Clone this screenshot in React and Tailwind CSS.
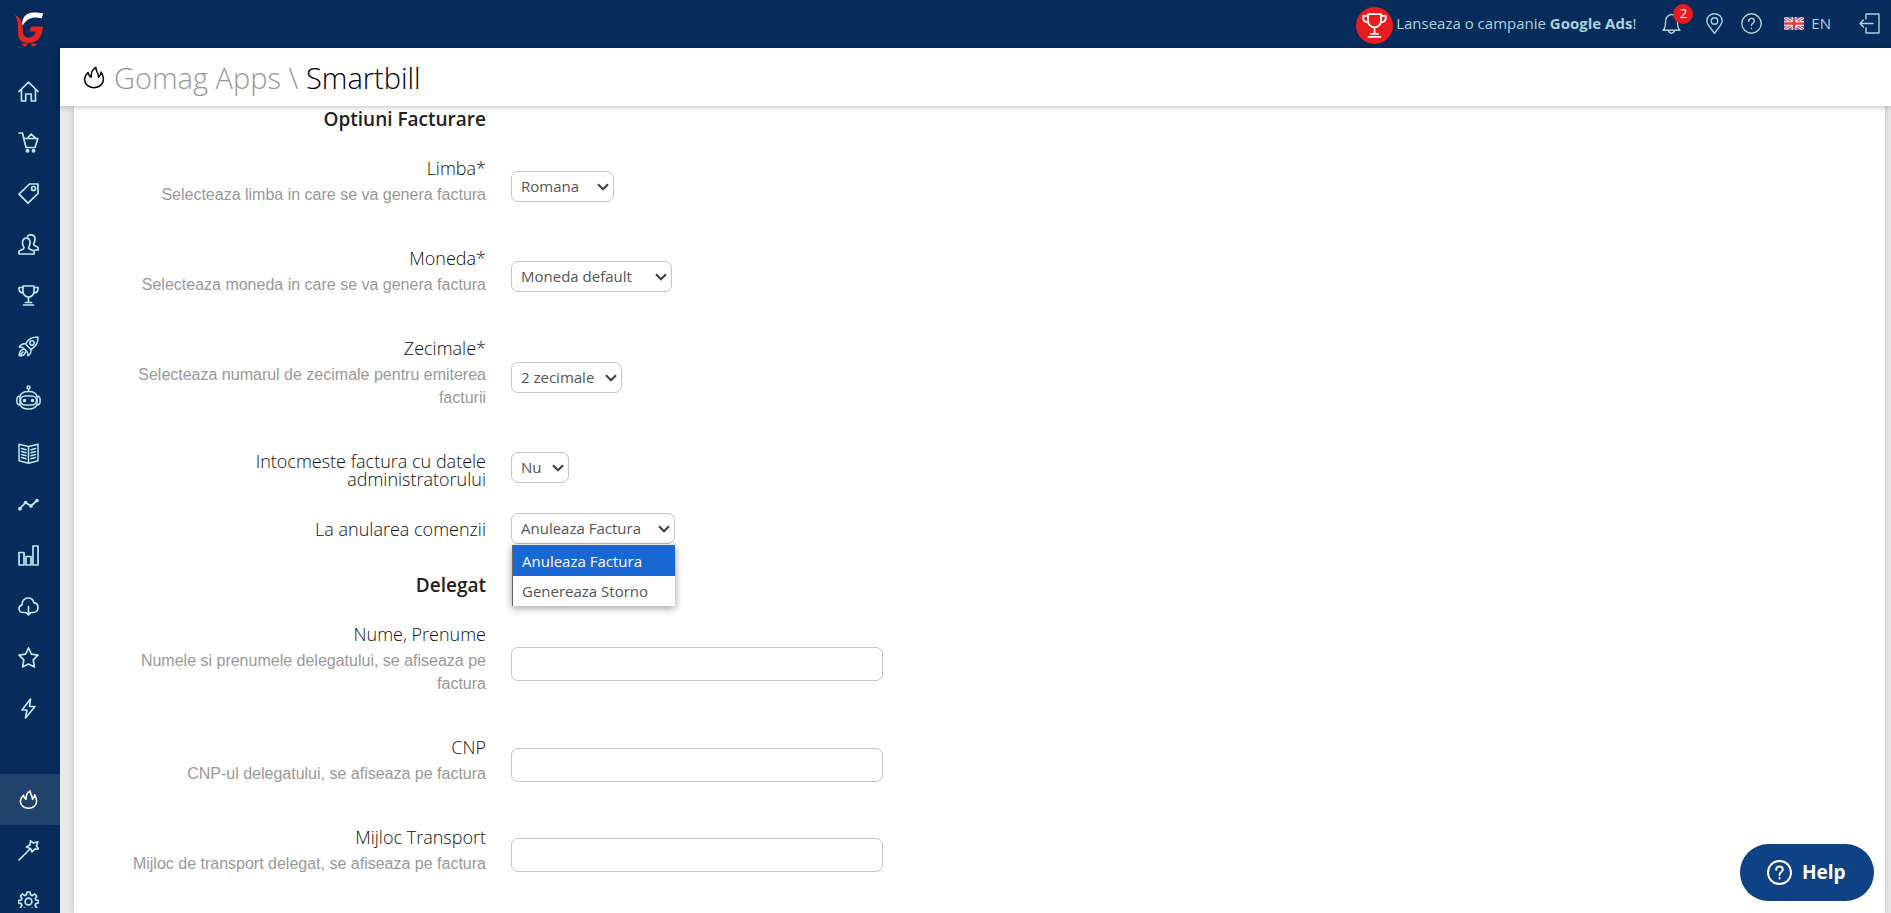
import { useState } from 'react';

const Icon = ({ children, className = 'w-[21px] h-[21px]', sw = 1.7, ...props }) => (
  <svg {...props} className={className} viewBox="0 0 21 21" fill="none" stroke="currentColor" strokeWidth={sw} strokeLinecap="round" strokeLinejoin="round" aria-hidden="true">
    {children}
  </svg>
);

const Trophy = (props) => (
  <Icon {...props}>
    <path d="M5 1h11v5.500c0 3-2.500 5.500-5.500 5.500S5 9.500 5 6.500zM5 2.500H1v1.500c0 2.300 1.700 3.800 4.300 4M16 2.500h4v1.500c0 2.300-1.700 3.800-4.300 4M10.500 12v5.500M7.500 17.500h6M5.500 20h10" />
  </Icon>
);

const Flame = (props) => (
  <Icon {...props}>
    <path d="M12.300 0.900C9.300 2.500 7.600 5.500 7.800 10.300C6.300 9.500 5.300 8 4.900 5.800C2.800 7.800 1.500 10 1.500 12.300C1.500 17 5.600 20.200 10.500 20.200S19.500 17 19.500 12.300C19.500 9.500 18.500 7.300 17.300 5.300C17 7.500 16.300 9 14.800 10.300C15 8 14.300 6.500 13.300 4.800C12.600 3.500 12.300 2.300 12.300 0.900z" />
  </Icon>
);

const mainNav = [
  { label: 'Acasa', icon: <Icon><path d="M1 10.500L10.500 1.200L20 10.500M3.500 8.500V20h4.200v-7h5.600v7h4.200V8.500" /></Icon> },
  {
    label: 'Comenzi',
    icon: (
      <Icon>
        <path d="M1 1h3.500l3.500 14.500h9L19.800 6.500H6M9 6.500l4.200-4.300L18 6.500" />
        <circle cx="9.500" cy="18.800" r="1.100" fill="currentColor" />
        <circle cx="15.500" cy="18.800" r="1.100" fill="currentColor" />
      </Icon>
    ),
  },
  { label: 'Produse', icon: <Icon><path d="M11.500 1H20v9.500L10 20.200L1 11.200z" /><circle cx="15.500" cy="5.500" r="2" /></Icon> },
  {
    label: 'Clienti',
    icon: (
      <Icon>
        <path d="M1 20v-2.500c0-1.500 5-1.800 5-3.500c0-1.200-1.500-2.500-1.500-5c0-3 1.500-4.800 3.800-4.800s3.800 1.800 3.800 4.800c0 2.500-1.500 3.800-1.500 5c0 1.700 5.500 2 5.500 3.500V20z" />
        <path d="M9.500 2.200C10.200 1.200 11.500 0.800 13 0.800c2.500 0 4 1.700 4 4.500c0 2.500-1.400 3.700-1.400 5.200c0 1.700 4.600 1.800 4.600 3.500v2h-3.400" />
      </Icon>
    ),
  },
  { label: 'Marketing', icon: <Trophy /> },
  {
    label: 'Promovare',
    icon: (
      <Icon sw={1.500}>
        <path d="M20 1c-6 0-9 1.500-12.500 7L13 13.500C18.500 10 20 7 20 1zM7.500 8C5 7.500 2.800 8.500 1.200 11.200c1.500-.4 3-.2 4 .8M13 13.500c.5 2.500-.5 4.700-3.200 6.300c.4-1.500.2-3-.8-4M5.200 12L9 15.800M5 13.500c-2.500.5-3.800 2.500-3.800 6.300c3.800 0 5.800-1.300 6.300-3.800M1.500 19.500l3.500-3.500" />
        <circle cx="14" cy="7" r="2.200" />
      </Icon>
    ),
  },
  {
    label: 'Automatizari',
    icon: (
      <svg className="w-[25px] h-[25px]" viewBox="0 0 25 25" fill="none" stroke="currentColor" strokeWidth="1.500" aria-hidden="true">
        <circle cx="12.500" cy="2.500" r="1.500" />
        <path d="M12.500 4v2.500M4 11.500C4.500 8.500 8 6.500 12.500 6.500s8 2 8.500 5M4 19.500c1 3 4 4.500 8.500 4.500s7.500-1.500 8.500-4.500M4 11v9C1.800 20 .8 18.500 .8 15.500S1.800 11 4 11zM21 11v9c2.200 0 3.200-1.500 3.200-4.500S23.200 11 21 11z" />
        <rect x="4.500" y="11" width="16" height="9" rx="4.500" />
        <circle cx="8.500" cy="15.500" r="1" fill="currentColor" />
        <circle cx="16.500" cy="15.500" r="1" fill="currentColor" />
      </svg>
    ),
  },
];

const reportNav = [
  {
    label: 'Continut',
    icon: (
      <Icon sw={1.500}>
        <path d="M1 1.200l9.500 2.300L20 1.200v16.500l-9.500 2.500L1 17.700zM10.500 3.500v16.500M3.500 5.500l4.500 1.200M3.500 8.500l4.500 1.200M3.500 11.500l4.500 1.200M3.500 14.500l4.500 1.200M17.500 5.500l-4.500 1.200M17.500 8.500l-4.500 1.200M17.500 11.500l-4.500 1.200M17.500 14.500l-4.500 1.200" />
      </Icon>
    ),
  },
  {
    label: 'Rapoarte',
    icon: (
      <Icon>
        <path d="M2 14.500l5.500-6l5.500 3.500l6-5.500" />
        <g fill="currentColor"><circle cx="2" cy="14.700" r="1" /><circle cx="7.500" cy="8.500" r="1" /><circle cx="13" cy="12" r="1" /><circle cx="19" cy="6.500" r="1" /></g>
      </Icon>
    ),
  },
  { label: 'Statistici', icon: <Icon><path d="M1 7.500h5V20H1zM8 11.500h5V20H8zM15 1h5v19h-5z" /></Icon> },
  {
    label: 'Import',
    icon: (
      <Icon>
        <path d="M7.500 16.500H5C2.800 16.500 1 14.800 1 12.700c0-1.900 1.300-3.300 3-3.700C3.800 5 6.500 2 10 2c3 0 5.300 1.800 5.800 4.700C18.300 7 20 8.800 20 11.500c0 2.800-2 5-4.500 5h-2M10.500 10.500v8M8.500 16.800l2 2l2-2" />
      </Icon>
    ),
  },
  { label: 'Recenzii', icon: <Icon><path d="M10.500 1l2.900 6.200l6.600.9l-4.800 4.800l1.200 7l-5.900-2.900L4.600 19.900l1.200-7L1 8.100l6.600-.9z" /></Icon> },
  { label: 'Integrari', icon: <Icon><path d="M12.500 1L4 12h5L7.500 20L17 8.500h-5.500z" /></Icon> },
];

const appNav = [
  { label: 'Gomag Apps', icon: <Flame className="h-[21px] w-[19px]" />, active: true },
  { label: 'Design', icon: <Icon><path d="M1 20L11.500 9.500M12.500 0.800l2.800 2.200L19.800 1.800l-1.400 4l2 3.200l-3.800.2L14 12l-1.300-3.300L8.500 7l3.600-2.200z" /></Icon> },
  {
    label: 'Setari',
    icon: (
      <Icon>
        <circle cx="10.500" cy="10.500" r="3.400" />
        <path d="M9 1h3l.5 2.800l1.800.8l2.400-1.600l2 2l-1.500 2.500l.7 1.500L20.500 9.500v2.500l-2.700.6l-.7 1.700l1.500 2.400l-2 2l-2.400-1.500l-1.700.7L12 20.500H9l-.5-2.600l-1.700-.7l-2.400 1.500l-2-2l1.500-2.400l-.7-1.700L.5 12V9.500L3.200 9l.7-1.500L2.400 5l2-2l2.400 1.600l1.700-.8z" />
      </Icon>
    ),
  },
];

const Logo = () => (
  <svg className="w-[30px] h-[35px]" viewBox="0 0 30 35" aria-hidden="true">
    <path fill="#fff" d="M8.500 14C7 6 12 0.500 19.500 0.500C23 0.500 26.500 0.500 29.300 1.500L27.500 6.300C21 4.500 13 5 8.500 14z" />
    <path fill="#e52320" d="M0.500 3C5.500 4.500 8 8.500 8.500 15C8.800 21 9.500 25.500 14.500 25.500C18.500 25.500 20.500 23.500 21.500 19.500H15.500L17 14.500H29C28.500 24 24.500 31 14 31C6.500 31 4 27 4 20C4 13 4 7 0.500 3z" />
    <path fill="#e52320" d="M8 31.500h5.500c0 4-5.500 4-5.500 0zM17 31.500h5.500c0 4-5.500 4-5.500 0z" />
  </svg>
);

const Flag = () => (
  <svg className="w-[20px] h-[13px]" viewBox="0 0 20 13" aria-hidden="true">
    <rect width="20" height="13" fill="#4b6fb8" />
    <path d="M0 0l20 13M20 0L0 13" stroke="#fff" strokeWidth="3" />
    <path d="M0 0l20 13M20 0L0 13" stroke="#ee4a50" strokeWidth="1.300" />
    <path d="M10 0v13M0 6.500h20" stroke="#fff" strokeWidth="4.600" />
    <path d="M10 0v13M0 6.500h20" stroke="#ee3a42" strokeWidth="2.600" />
  </svg>
);

const HelpCircle = (props) => (
  <Icon {...props}>
    <circle cx="10.500" cy="10.500" r="9.700" />
    <path d="M7.700 8.200c0-1.700 1.200-2.800 2.800-2.800s2.800 1.100 2.800 2.600c0 2-2.800 2.200-2.800 4.500M10.500 15.200v.3" />
  </Icon>
);

const NavItem = ({ item }) => (
  <a
    href="#"
    aria-label={item.label}
    className={`flex h-[51px] shrink-0 items-center justify-center pr-[3px] ${item.active ? 'bg-[#21426b] text-white' : 'text-[#bfe9f2]'}`}
  >
    {item.icon}
  </a>
);

const SectionTitle = ({ children }) => (
  <h2 className="mb-[31px] w-[412px] text-right text-[19px] leading-[18px] font-semibold text-[#222]">{children}</h2>
);

const Field = ({ id, label, hint, children, className = 'items-center mb-9' }) => (
  <div className={`flex gap-[25px] ${className}`}>
    <div className="w-[412px] shrink-0 pl-[52px] text-right">
      <label htmlFor={id} className="block text-[18px] leading-[18px] font-light text-[#111]">{label}</label>
      {hint && (
        <p className="mt-[6px] mb-[7px] font-['Liberation_Sans',Arial,sans-serif] text-[16px] leading-[23px] text-[#999]">{hint}</p>
      )}
    </div>
    {children}
  </div>
);

const Select = ({ className, children, ...props }) => (
  <div className={`relative ${className}`}>
    <select {...props} className="block h-[31px] w-full appearance-none rounded-[7px] border border-[#c4c4c4] bg-white pl-[9px] text-[15px] text-[#555]">
      {children}
    </select>
    <svg className="pointer-events-none absolute top-[12px] right-[5px] h-2 w-3" viewBox="0 0 12 8" fill="none" stroke="#444" strokeWidth="2.200" aria-hidden="true">
      <path d="M1 1.300l5 5l5-5" />
    </svg>
  </div>
);

const TextInput = ({ id }) => (
  <input id={id} type="text" className="h-[34px] w-[372px] rounded-[7px] border border-[#c4c4c4] bg-white px-3 text-[15px] text-[#555]" />
);

const cancelOptions = ['Anuleaza Factura', 'Genereaza Storno'];

const App = () => {
  const [cancelAction, setCancelAction] = useState(cancelOptions[0]);
  const [menuOpen, setMenuOpen] = useState(true);

  return (
    <div className="flex h-screen overflow-hidden bg-[#eaeaea] font-['Open_Sans',sans-serif]">
      {/* Sidebar */}
      <aside className="flex w-[60px] shrink-0 flex-col bg-[#072b5a]">
        <a href="#" aria-label="Gomag" className="flex h-[66px] shrink-0 justify-center pt-3 pr-[3px]">
          <Logo />
        </a>
        <nav className="mb-[5px] flex min-h-0 flex-1 flex-col overflow-hidden">
          {mainNav.map((item) => <NavItem key={item.label} item={item} />)}
          <div className="mt-[5px] mb-[40px] flex flex-col">
            {reportNav.map((item) => <NavItem key={item.label} item={item} />)}
          </div>
          {appNav.map((item) => <NavItem key={item.label} item={item} />)}
        </nav>
      </aside>

      <div className="flex min-w-0 flex-1 flex-col">
        {/* Top bar */}
        <header className="flex h-12 shrink-0 items-center justify-end bg-[#072b5a] pr-[11px] pb-[2px] text-[15px] text-[#a5d4dd]">
          <a href="#" className="mr-[25px] flex items-center gap-[3px]">
            <span className="mt-1 flex h-[37px] w-[37px] items-center justify-center rounded-full bg-[#e81c1f] text-white">
              <Trophy className="h-[25px] w-[25px]" sw={1.500} />
            </span>
            <span>Lanseaza o campanie <b>Google Ads</b>!</span>
          </a>
          <button type="button" aria-label="Notificari" className="relative mr-[22px]">
            <Icon sw={1.400}>
              <path d="M2 17.300c2-1.500 2.500-3.500 2.500-8C4.500 5 6.800 1.500 10.500 1.500S16.500 5 16.500 9.300c0 4.500.5 6.500 2.500 8zM7.500 17.500c.3 1.800 1.500 2.700 3 2.700s2.700-.9 3-2.700" />
            </Icon>
            <span className="absolute -top-[9px] left-[12px] flex h-5 w-5 items-center justify-center rounded-full bg-[#e81c1f] text-[13px] text-white">2</span>
          </button>
          <button type="button" aria-label="Locatii" className="mr-[16px]">
            <Icon sw={1.400}>
              <path d="M10.500 20.300C6.500 14.500 2.800 11.500 2.800 8C2.800 3.800 6.200 .8 10.500 .8S18.200 3.800 18.200 8c0 3.500-3.700 6.500-7.700 12.300z" />
              <circle cx="10.500" cy="8" r="3.200" />
            </Icon>
          </button>
          <button type="button" aria-label="Ajutor" className="mr-[22px]">
            <HelpCircle sw={1.400} />
          </button>
          <button type="button" className="mr-[28px] flex items-center gap-[7px]">
            <Flag />
            <span>EN</span>
          </button>
          <a href="#" aria-label="Iesire">
            <Icon sw={1.400}>
              <path d="M7 6V1h13v19H7v-5M14 10.500H1M4.500 7L1 10.500L4.500 14" />
            </Icon>
          </a>
        </header>

        {/* Page title */}
        <div className="relative z-10 flex h-[58px] shrink-0 items-center gap-[9px] bg-white pt-px pl-[23px] shadow-[0_1px_6px_rgba(0,0,0,0.25)]">
          <Flame className="h-[25px] w-[22px] text-black" sw={1.400} />
          <h1 className="text-[29px] leading-[40px] font-light text-black">
            <span className="text-[#999]">Gomag Apps \ </span>Smartbill
          </h1>
        </div>

        {/* Form */}
        <main className="min-h-0 flex-1 overflow-hidden pr-[6px] pl-[14px]">
          <form className="min-h-full bg-white pt-1 shadow-[0_0_7px_rgba(0,0,0,0.2)]">
            <SectionTitle>Optiuni Facturare</SectionTitle>
            <Field id="limba" label="Limba*" hint="Selecteaza limba in care se va genera factura">
              <Select id="limba" className="w-[103px]"><option>Romana</option></Select>
            </Field>
            <Field id="moneda" label="Moneda*" hint="Selecteaza moneda in care se va genera factura">
              <Select id="moneda" className="w-[161px]"><option>Moneda default</option></Select>
            </Field>
            <Field id="zecimale" label="Zecimale*" hint="Selecteaza numarul de zecimale pentru emiterea facturii">
              <Select id="zecimale" className="w-[111px]"><option>2 zecimale</option></Select>
            </Field>
            <Field id="admin" label="Intocmeste factura cu datele administratorului" className="mb-[25px] h-9 items-start">
              <Select id="admin" className="w-[58px]"><option>Nu</option><option>Da</option></Select>
            </Field>
            <Field id="anulare" label="La anularea comenzii" className="mb-8 items-center">
              <div className="relative">
                <Select
                  id="anulare"
                  value={cancelAction}
                  onChange={(e) => setCancelAction(e.target.value)}
                  className="w-[164px]"
                >
                  {cancelOptions.map((option) => <option key={option}>{option}</option>)}
                </Select>
                {menuOpen && (
                  <ul role="listbox" aria-label="La anularea comenzii" className="absolute top-full left-px z-10 mt-px w-[163px] border-t border-l border-[#666] bg-white text-[15px] leading-[30px] text-[#555] shadow-[0_2px_8px_rgba(0,0,0,0.4)]">
                    {cancelOptions.map((option) => (
                      <li
                        key={option}
                        role="option"
                        aria-selected={option === cancelAction}
                        onClick={() => { setCancelAction(option); setMenuOpen(false); }}
                        className={`pl-[9px] ${option === cancelAction ? 'bg-[#1967d2] text-white' : ''}`}
                      >
                        {option}
                      </li>
                    ))}
                  </ul>
                )}
              </div>
            </Field>

            <SectionTitle>Delegat</SectionTitle>
            <Field id="nume" label="Nume, Prenume" hint="Numele si prenumele delegatului, se afiseaza pe factura">
              <TextInput id="nume" />
            </Field>
            <Field id="cnp" label="CNP" hint="CNP-ul delegatului, se afiseaza pe factura">
              <TextInput id="cnp" />
            </Field>
            <Field id="transport" label="Mijloc Transport" hint="Mijloc de transport delegat, se afiseaza pe factura">
              <TextInput id="transport" />
            </Field>
          </form>
        </main>
      </div>

      <button type="button" className="fixed right-[17px] bottom-3 z-20 flex h-[57px] w-[134px] items-center gap-[10px] rounded-full bg-[#0f4284] pl-[27px] text-[19px] font-bold text-white">
        <HelpCircle className="h-[25px] w-[25px]" sw={1.700} />
        Help
      </button>
    </div>
  );
};

export default App;
